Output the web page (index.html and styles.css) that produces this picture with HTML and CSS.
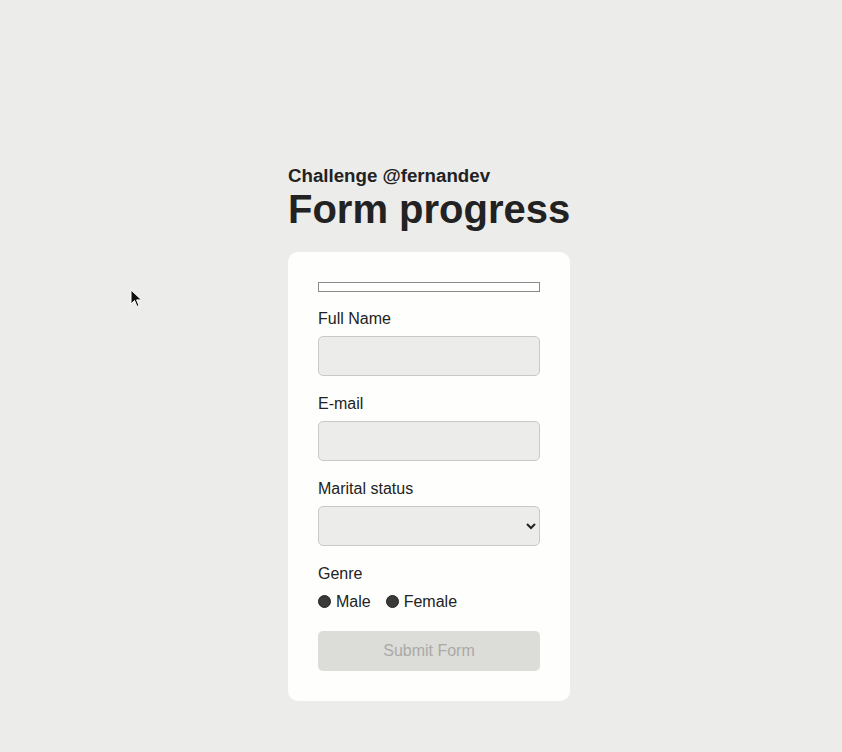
FILE: index.html
```html
<!DOCTYPE html>
<html lang="en">
<head>
<meta charset="utf-8">
<title>Form progress</title>
<link rel="stylesheet" href="styles.css">
</head>
<body>
<main class="page">
  <section class="wrap">
    <h2 class="kicker">Challenge @fernandev</h2>
    <h1 class="title">Form progress</h1>
    <form class="card">
      <div class="progress"></div>
      <div class="field">
        <label class="label" for="name">Full Name</label>
        <input class="input" id="name" type="text">
      </div>
      <div class="field">
        <label class="label" for="email">E-mail</label>
        <input class="input" id="email" type="email">
      </div>
      <div class="field">
        <label class="label" for="status">Marital status</label>
        <select class="input select" id="status"><option></option></select>
      </div>
      <div class="field">
        <span class="label">Genre</span>
        <div class="radios">
          <label class="radio"><input type="radio" name="g"> Male</label>
          <label class="radio"><input type="radio" name="g"> Female</label>
        </div>
      </div>
      <button class="submit" type="button" disabled>Submit Form</button>
    </form>
  </section>
</main>
<svg class="cursor" width="14" height="20" viewBox="0 0 14 20"><path d="M1 1 L1 15 L4.5 11.5 L7 17.5 L9 16.6 L6.6 10.9 L11.5 10.9 Z" fill="#111" stroke="#fff" stroke-width="1"/></svg>
</body>
</html>
```
FILE: styles.css
```css
html, body { margin: 0; padding: 0; }
body {
  background: #ececea;
  font-family: "Liberation Sans", Arial, sans-serif;
  color: #222;
  width: 842px;
  height: 752px;
  position: relative;
  overflow: hidden;
}
.page {
  display: flex;
  justify-content: center;
  padding-top: 165px;
  padding-left: 16px;
}
.wrap {
  display: flex;
  flex-direction: column;
  width: 282px;
}
.kicker {
  margin: 0;
  font-size: 18.7px;
  line-height: 22px;
  font-weight: 700;
  color: #222;
  white-space: nowrap;
}
.title {
  margin: 0;
  font-size: 40px;
  line-height: 45px;
  font-weight: 700;
  color: #222;
  white-space: nowrap;
}
.card {
  margin-top: 20px;
  background: #fefefc;
  border-radius: 10px;
  padding: 30px;
  display: flex;
  flex-direction: column;
}
.progress {
  height: 8px;
  border: 1px solid #8a8a88;
  background: #fff;
  margin-bottom: 18px;
}
.field {
  display: flex;
  flex-direction: column;
  margin-bottom: 19px;
}
.label {
  font-size: 16px;
  line-height: 18px;
  margin-bottom: 8px;
  color: #222;
}
.input {
  box-sizing: border-box;
  height: 40px;
  width: 100%;
  margin: 0;
  background: #ececea;
  border: 1px solid #c9c9c7;
  border-radius: 5px;
  font-family: inherit;
  font-size: 16px;
}
.select { color: #222; }
.radios {
  display: flex;
  gap: 15px;
  margin-top: 2px;
}
.radio {
  display: flex;
  align-items: center;
  font-size: 16px;
  line-height: 18px;
}
.radio input {
  appearance: none;
  -webkit-appearance: none;
  width: 13px;
  height: 13px;
  border-radius: 50%;
  background: #3a3a38;
  border: 1px solid #222;
  margin: -2px 5px 0 0;
  box-sizing: border-box;
}
.submit {
  height: 40px;
  border: none;
  border-radius: 5px;
  background: #dcdcd9;
  color: #aaaaa7;
  font-family: inherit;
  font-size: 16px;
  margin-top: 1px;
}
.cursor {
  position: absolute;
  left: 130px;
  top: 289px;
}
```
